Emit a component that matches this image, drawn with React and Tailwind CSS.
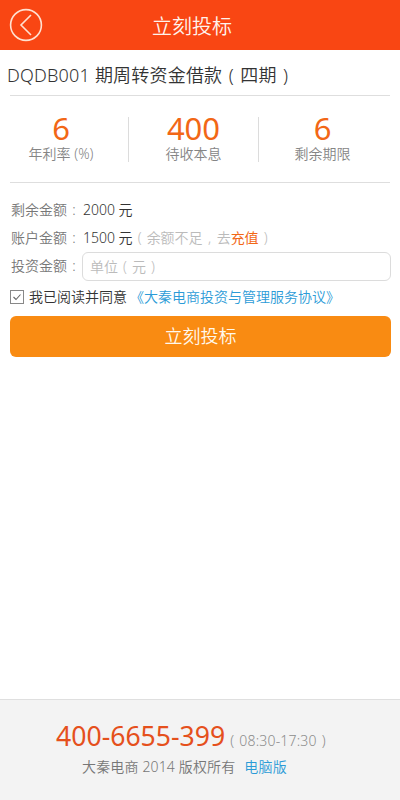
import { useState } from "react";

const stats = [
  { value: "6", label: "年利率 (%)" },
  { value: "400", label: "待收本息" },
  { value: "6", label: "剩余期限" },
];

// full-width cell with the mark in its middle
const Mark = ({ children }) => (
  <span className="inline-block w-[1em] text-center">{children}</span>
);

const Header = () => (
  <header className="relative h-[50px] bg-[#f94613] flex items-center justify-center">
    <button type="button" className="absolute left-[9px] top-[8px]">
      <svg width="34" height="34" viewBox="0 0 34 34" fill="none" stroke="#ffe0d0" strokeWidth="1.6">
        <circle cx="17" cy="17" r="15.4" />
        <path d="M22 7 L12 17 L22 27" />
      </svg>
    </button>
    <h1 className="text-[20px] leading-[30px] text-[#fff3ec] font-[350] pr-4 pt-[3px]">立刻投标</h1>
  </header>
);

const Stats = () => (
  <div className="mx-[10px] h-[87px] pt-[21px] flex border-b border-[#dedede]">
    {stats.map((item, index) => (
      <div
        key={index}
        className="h-[45px] w-[130px] border-r border-[#dcdcdc] last:border-r-0 last:w-[127px] first:w-[119px] first:pr-4 flex flex-col items-center"
      >
        <span className="text-[31px] leading-[23px] font-normal text-[#f26716]">{item.value}</span>
        <span className="text-[14px] leading-[20px] mt-[4px] text-[#858585] whitespace-nowrap">{item.label}</span>
      </div>
    ))}
  </div>
);

const Footer = () => (
  <footer className="h-[101px] bg-[#f3f3f3] border-t border-[#dfdfdf] pt-[20px]">
    <div className="flex items-baseline pl-[56px] leading-[32px] whitespace-nowrap">
      <span className="text-[26.6px] font-normal text-[#e5501c]">400-6655-399</span>
      <span className="text-[14px] tracking-[0.2px] text-[#8c8c8c]">
        <Mark>(</Mark>08:30-17:30<Mark>)</Mark>
      </span>
    </div>
    <div className="pl-[82px] text-[14px] leading-[20px] tracking-[0.15px] text-[#777]">
      大秦电商 2014 版权所有
      <a className="ml-[9px] text-[#2b9bd7]">电脑版</a>
    </div>
  </footer>
);

const App = () => {
  const [agree, setAgree] = useState(true);
  const [amount, setAmount] = useState("");

  return (
    <main className="h-screen w-full bg-white flex flex-col font-['Noto_Sans','Noto_Sans_CJK_SC',sans-serif] font-[350]">
      <Header />
      <h2 className="mx-[10px] h-[46px] pt-[12px] text-[18px] leading-[26px] font-[350] tracking-[0.2px] text-[#333] border-b border-[#dedede] whitespace-nowrap">
        <span className="-ml-[3px]">
          DQDB001 期周转资金借款<Mark>(</Mark>四期<Mark>)</Mark>
        </span>
      </h2>
      <Stats />

      <section className="pl-[11px] pr-[9px] pt-[13px] text-[14px] leading-[28px] text-[#777]">
        <div className="flex h-[28px]">
          <span className="w-[72px]">剩余金额<Mark>:</Mark></span>
          <span className="text-[#333]">2000 元</span>
        </div>
        <div className="flex h-[28px] whitespace-nowrap">
          <span className="w-[72px]">账户金额<Mark>:</Mark></span>
          <span className="text-[#333]">1500 元</span>
          <span className="text-[#bbb]">
            <Mark>(</Mark>余额不足<Mark>,</Mark>去
            <a className="text-[#f26716] font-normal">充值</a>
            <Mark>)</Mark>
          </span>
        </div>
        <div className="flex h-[29px]">
          <span className="w-[71px]">投资金额<Mark>:</Mark></span>
          <label className="relative flex-1 h-[29px] border border-[#dcdcdc] rounded-md">
            <input
              value={amount}
              onChange={(e) => setAmount(e.target.value)}
              className="w-full h-full px-[7px] text-[#444] outline-none"
            />
            {!amount && (
              <span className="absolute left-[7px] top-0 leading-[27px] text-[#bbb]">
                单位<Mark>(</Mark>元<Mark>)</Mark>
              </span>
            )}
          </label>
        </div>
      </section>

      <div className="flex items-center h-[35px] pb-[4px] pl-[10px] text-[14px] text-[#333] whitespace-nowrap">
        <button
          type="button"
          onClick={() => setAgree(!agree)}
          className="w-[14px] h-[14px] border border-[#888] flex items-center justify-center mr-[5px]"
        >
          {agree && (
            <svg width="10" height="10" viewBox="0 0 10 10" fill="none" stroke="#666" strokeWidth="1.1">
              <path d="M1.5 5 L4 7.5 L8.5 2.5" />
            </svg>
          )}
        </button>
        <span>我已阅读并同意</span>
        <a className="text-[#2b9bd7] ml-[3px]">《大秦电商投资与管理服务协议》</a>
      </div>

      <button
        type="button"
        className="ml-[10px] mr-[9px] h-[41px] rounded-md bg-[#f98b12] text-[18px] font-[350] text-[#fff8ec]"
      >
        立刻投标
      </button>

      <div className="flex-1" />
      <Footer />
    </main>
  );
};

export default App;
